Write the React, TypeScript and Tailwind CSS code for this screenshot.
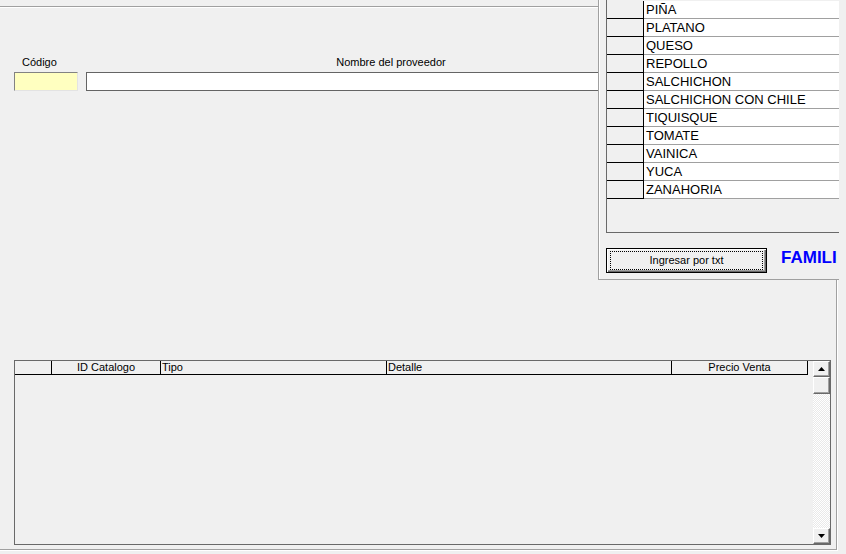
const productos = [
  'PIÑA',
  'PLATANO',
  'QUESO',
  'REPOLLO',
  'SALCHICHON',
  'SALCHICHON CON CHILE',
  'TIQUISQUE',
  'TOMATE',
  'VAINICA',
  'YUCA',
  'ZANAHORIA',
];

function ScrollButton({ dir }: { dir: 'up' | 'down' }) {
  return (
    <div className="flex h-[16px] w-full items-center justify-center border border-t-white border-l-white border-r-[#696969] border-b-[#696969] bg-[#f0f0f0] shadow-[inset_-1px_-1px_0_#a0a0a0]">
      <svg width="7" height="4" viewBox="0 0 7 4">
        {dir === 'up' ? <path d="M3.5 0 L7 4 L0 4 Z" fill="#000" /> : <path d="M0 0 L7 0 L3.5 4 Z" fill="#000" />}
      </svg>
    </div>
  );
}

export default function App() {
  return (
    <div className="relative h-[554px] w-[846px] overflow-hidden bg-[#f0f0f0] font-['Liberation_Sans',Arial,sans-serif] text-black">
      {/* marco grabado */}
      <div className="mt-[6px] h-[545px] w-[838px] border-t border-r border-b border-t-[#a0a0a0] border-r-white border-b-white">
        <div className="flex h-full flex-col border-t border-r border-b border-t-white border-r-[#a0a0a0] border-b-[#a0a0a0]">
          {/* etiquetas */}
          <div className="mt-[48px] flex text-[11px] leading-[13px]">
            <div className="ml-[14px] w-[64px] pl-[8px]">Código</div>
            <div className="ml-[8px] w-[610px] text-center">Nombre del proveedor</div>
          </div>

          {/* campos */}
          <div className="mt-[3px] flex">
            <div className="ml-[14px] h-[19px] w-[64px] border border-t-[#828282] border-l-[#828282] border-r-[#e3e3e3] border-b-[#e3e3e3] bg-[#ffffc0]" />
            <div className="ml-[8px] h-[19px] w-[610px] border border-[#646464] bg-white" />
          </div>

          {/* tabla del catalogo */}
          <div className="ml-[14px] mt-[269px] flex h-[185px] w-[817px] border border-[#696969]">
            <div className="flex-1">
              <div className="flex h-[14px] w-[793px] border-b border-black text-[11px] leading-[13px]">
                <div className="w-[37px] border-r border-black" />
                <div className="w-[109px] border-r border-black text-center">ID Catalogo</div>
                <div className="w-[226px] border-r border-black pl-[1px]">Tipo</div>
                <div className="w-[285px] border-r border-black pl-[1px]">Detalle</div>
                <div className="w-[136px] border-r border-black text-center">Precio Venta</div>
              </div>
            </div>
            <div className="flex w-[17px] flex-col">
              <ScrollButton dir="up" />
              <div className="h-[17px] border border-t-white border-l-white border-r-[#696969] border-b-[#696969] bg-[#f0f0f0] shadow-[inset_-1px_-1px_0_#a0a0a0]" />
              <div className="flex-1 bg-[repeating-conic-gradient(#ffffff_0%_25%,#e9e9e9_0%_50%)] bg-[length:2px_2px]" />
              <ScrollButton dir="down" />
            </div>
          </div>
        </div>
      </div>

      {/* ventana de familias superpuesta */}
      <div className="absolute left-[598px] top-0 h-[280px] w-[241px] overflow-hidden border-l border-b border-[#a0a0a0] bg-[#f0f0f0] shadow-[inset_1px_0_0_#ffffff]">
        <div className="ml-[7px] h-[233px] w-[260px] border-l border-b border-[#696969] pt-[1px]">
          {productos.map((p) => (
            <div key={p} className="flex h-[18px]">
              <div className="w-[37px] border-r border-b border-black bg-[#f0f0f0]" />
              <div className="flex-1 whitespace-nowrap border-b border-[#a0a0a0] bg-white pl-[2px] text-[13px] leading-[17px]">{p}</div>
            </div>
          ))}
        </div>
        <div className="mt-[15px] flex items-start">
          <button className="ml-[7px] flex h-[25px] w-[161px] shrink-0 border border-black bg-[#f0f0f0] px-[3px] py-[2px] shadow-[inset_1px_1px_0_#ffffff,inset_-1px_-1px_0_#696969,inset_-2px_-2px_0_#a0a0a0]">
            <span className="flex flex-1 items-center justify-center border border-dotted border-black text-[11px] leading-[13px]">
              Ingresar por txt
            </span>
          </button>
          <span className="ml-[14px] shrink-0 whitespace-nowrap text-[17px] font-bold leading-[20px] text-[#0000ff]">FAMILI</span>
        </div>
      </div>
    </div>
  );
}
